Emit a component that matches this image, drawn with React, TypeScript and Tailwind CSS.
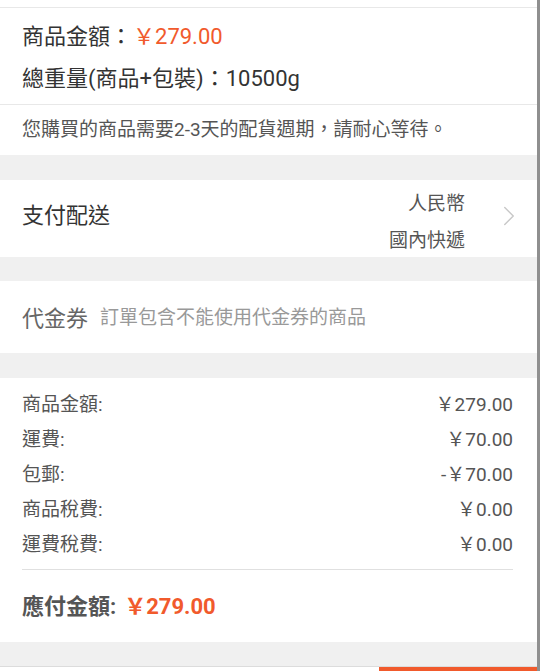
import { ChevronRight } from 'lucide-react';

const FONT = { fontFamily: "Roboto, 'Noto Sans CJK TC', sans-serif" };

const SUMMARY = [
  { label: '商品金額:', value: '￥279.00' },
  { label: '運費:',     value: '￥70.00' },
  { label: '包郵:',     value: '-￥70.00' },
  { label: '商品稅費:', value: '￥0.00' },
  { label: '運費稅費:', value: '￥0.00' },
];

export default function App() {
  return (
    <div className="flex w-[540px] h-[671px] overflow-hidden bg-[#f0f0f0]" style={FONT}>
      <div className="flex-1 flex flex-col">
        {/* previous block edge */}
        <div className="h-[8px] bg-white border-b border-[#e8e8e8] shrink-0" />

        {/* order info */}
        <div className="bg-white px-[22px] pt-[13px] pb-[11px] flex flex-col gap-[12px] border-b border-[#e8e8e8] shrink-0">
          <div className="h-[30px] flex items-center text-[22px] text-[#333]">
            商品金額：<span className="ml-[1px] text-[#f15a2c]">￥279.00</span>
          </div>
          <div className="h-[30px] flex items-center text-[22px] text-[#333]">
            總重量(商品+包裝)：10500g
          </div>
        </div>
        <div className="bg-white h-[50px] px-[22px] flex items-center text-[19px] text-[#555] shrink-0">
          您購買的商品需要2-3天的配貨週期，請耐心等待。
        </div>

        <div className="h-[25px] shrink-0" />

        {/* payment & shipping */}
        <div className="bg-white h-[77px] pl-[22px] pr-[11px] flex items-center shrink-0">
          <span className="flex-1 text-[22px] text-[#333] mb-[7px]">支付配送</span>
          <div className="flex flex-col items-end gap-[10px] text-[19px] text-[#555] leading-[27px] pt-[6px]">
            <span>人民幣</span>
            <span>國內快遞</span>
          </div>
          <ChevronRight size={34} strokeWidth={1} className="ml-[27px] mb-[6px] text-[#c8c8c8]" />
        </div>

        <div className="h-[24px] shrink-0" />

        {/* coupon */}
        <div className="bg-white h-[72px] px-[22px] pt-[3px] flex items-center gap-[12px] shrink-0">
          <span className="text-[22px] text-[#666]">代金券</span>
          <span className="text-[19px] text-[#999]">訂單包含不能使用代金券的商品</span>
        </div>

        <div className="h-[25px] shrink-0" />

        {/* summary */}
        <div className="bg-white pl-[22px] pr-[24px] pt-[10px] shrink-0">
          <div className="flex flex-col pb-[6px] border-b border-[#e0e0e0]">
            {SUMMARY.map((row) => (
              <div key={row.label} className="h-[35px] flex items-center justify-between text-[19px] text-[#555]">
                <span>{row.label}</span>
                <span>{row.value}</span>
              </div>
            ))}
          </div>
          <div className="h-[72px] flex items-center gap-[8px] text-[22px] font-bold">
            <span className="text-[#555]">應付金額:</span>
            <span className="text-[#f15a2c]">￥279.00</span>
          </div>
        </div>

        <div className="flex-1 border-b border-[#dcdcdc]" />

        {/* bottom bar edge */}
        <div className="h-[4px] flex shrink-0 bg-white">
          <div className="flex-1" />
          <div className="w-[158px] bg-[#f15a2c]" />
        </div>
      </div>

      {/* scrollbar */}
      <div className="w-[3px] bg-[#8f8f8f] shrink-0" />
    </div>
  );
}
